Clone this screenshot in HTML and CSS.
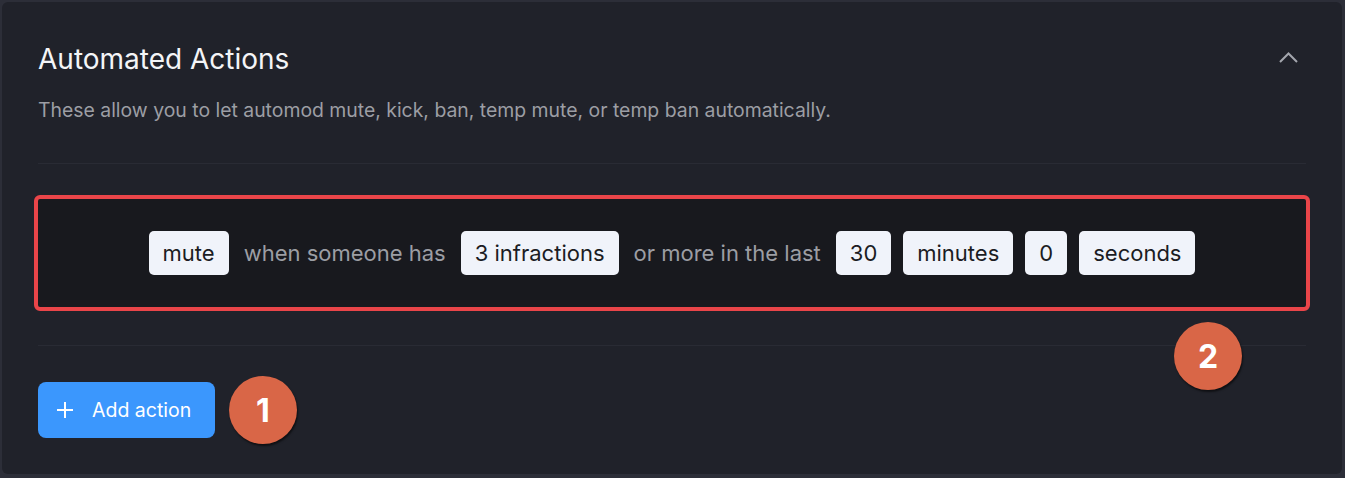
FILE: index.html
```html
<!DOCTYPE html>
<html>
<head>
<meta charset="utf-8">
<link rel="stylesheet" href="styles.css">
</head>
<body>
<div class="card">
  <div class="header">
    <div class="titles">
      <h2 class="title">Automated Actions</h2>
      <p class="desc">These allow you to let automod mute, kick, ban, temp mute, or temp ban automatically.</p>
    </div>
    <svg class="chevron" width="19" height="11" viewBox="0 0 19 11"><path d="M1 10 L9.5 1.5 L18 10" fill="none" stroke="#a3a6ad" stroke-width="2"/></svg>
  </div>
  <div class="divider"></div>
  <div class="rule">
    <span class="chip">mute</span>
    <span class="word">when someone has</span>
    <span class="chip">3 infractions</span>
    <span class="word">or more in the last</span>
    <span class="chip">30</span>
    <span class="chip">minutes</span>
    <span class="chip">0</span>
    <span class="chip">seconds</span>
  </div>
  <div class="divider"></div>
  <div class="footer">
    <button class="add-btn"><svg width="16" height="16" viewBox="0 0 16 16"><path d="M8 0 V16 M0 8 H16" stroke="#fff" stroke-width="2"/></svg><span>Add action</span></button>
  </div>
  <div class="badge badge-1">1</div>
  <div class="badge badge-2">2</div>
</div>
</body>
</html>
```
FILE: styles.css
```css
html, body {
  margin: 0;
  padding: 0;
  background: #2c2e38;
  height: 100%;
}
body {
  font-family: "Inter", "Lato", sans-serif;
}
.card {
  position: relative;
  margin: 2px 3px 0 2px;
  height: 472px;
  box-sizing: border-box;
  background: #20222a;
  border-radius: 6px;
  padding: 0 36px;
}
.header {
  display: flex;
  justify-content: space-between;
  align-items: flex-start;
  padding-top: 41px;
  height: 161px;
  box-sizing: border-box;
}
.title {
  margin: 0;
  font-weight: 400;
  font-size: 28px;
  line-height: 32px;
  color: #f4f5f7;
}
.desc {
  margin: 23px 0 0;
  font-size: 19.4px;
  line-height: 24px;
  color: #9c9ea4;
}
.chevron {
  margin-top: 9px;
  margin-right: 8px;
}
.divider {
  height: 1px;
  background: #292b34;
}
.rule {
  margin: 35px 0 38px;
  height: 108px;
  background: #18191e;
  outline: 4px solid #ea4549;
  border-radius: 2px;
  display: flex;
  align-items: center;
  justify-content: center;
  gap: 12px;
}
.chip {
  background: #f0f3fa;
  color: #1b1c23;
  border-radius: 5px;
  height: 44px;
  padding: 0 14px;
  display: flex;
  align-items: center;
  font-size: 22px;
}
.word {
  color: #9c9ea4;
  font-size: 22px;
  margin: 0 3px;
}
.footer {
  padding-top: 36px;
}
.add-btn {
  display: flex;
  align-items: center;
  gap: 19px;
  height: 56px;
  padding: 0 24px 0 19px;
  background: #3b97fd;
  border: none;
  border-radius: 8px;
  color: #fff;
  font-family: inherit;
  font-size: 19.5px;
}
.badge {
  position: absolute;
  width: 68px;
  height: 68px;
  border-radius: 50%;
  background: #d96647;
  color: #fff;
  font-weight: 700;
  font-size: 32px;
  display: flex;
  align-items: center;
  justify-content: center;
  box-shadow: 1px 2px 2px rgba(0, 0, 0, 0.55);
}
.badge-1 {
  left: 227px;
  top: 374px;
}
.badge-2 {
  left: 1172px;
  top: 320px;
}
```
